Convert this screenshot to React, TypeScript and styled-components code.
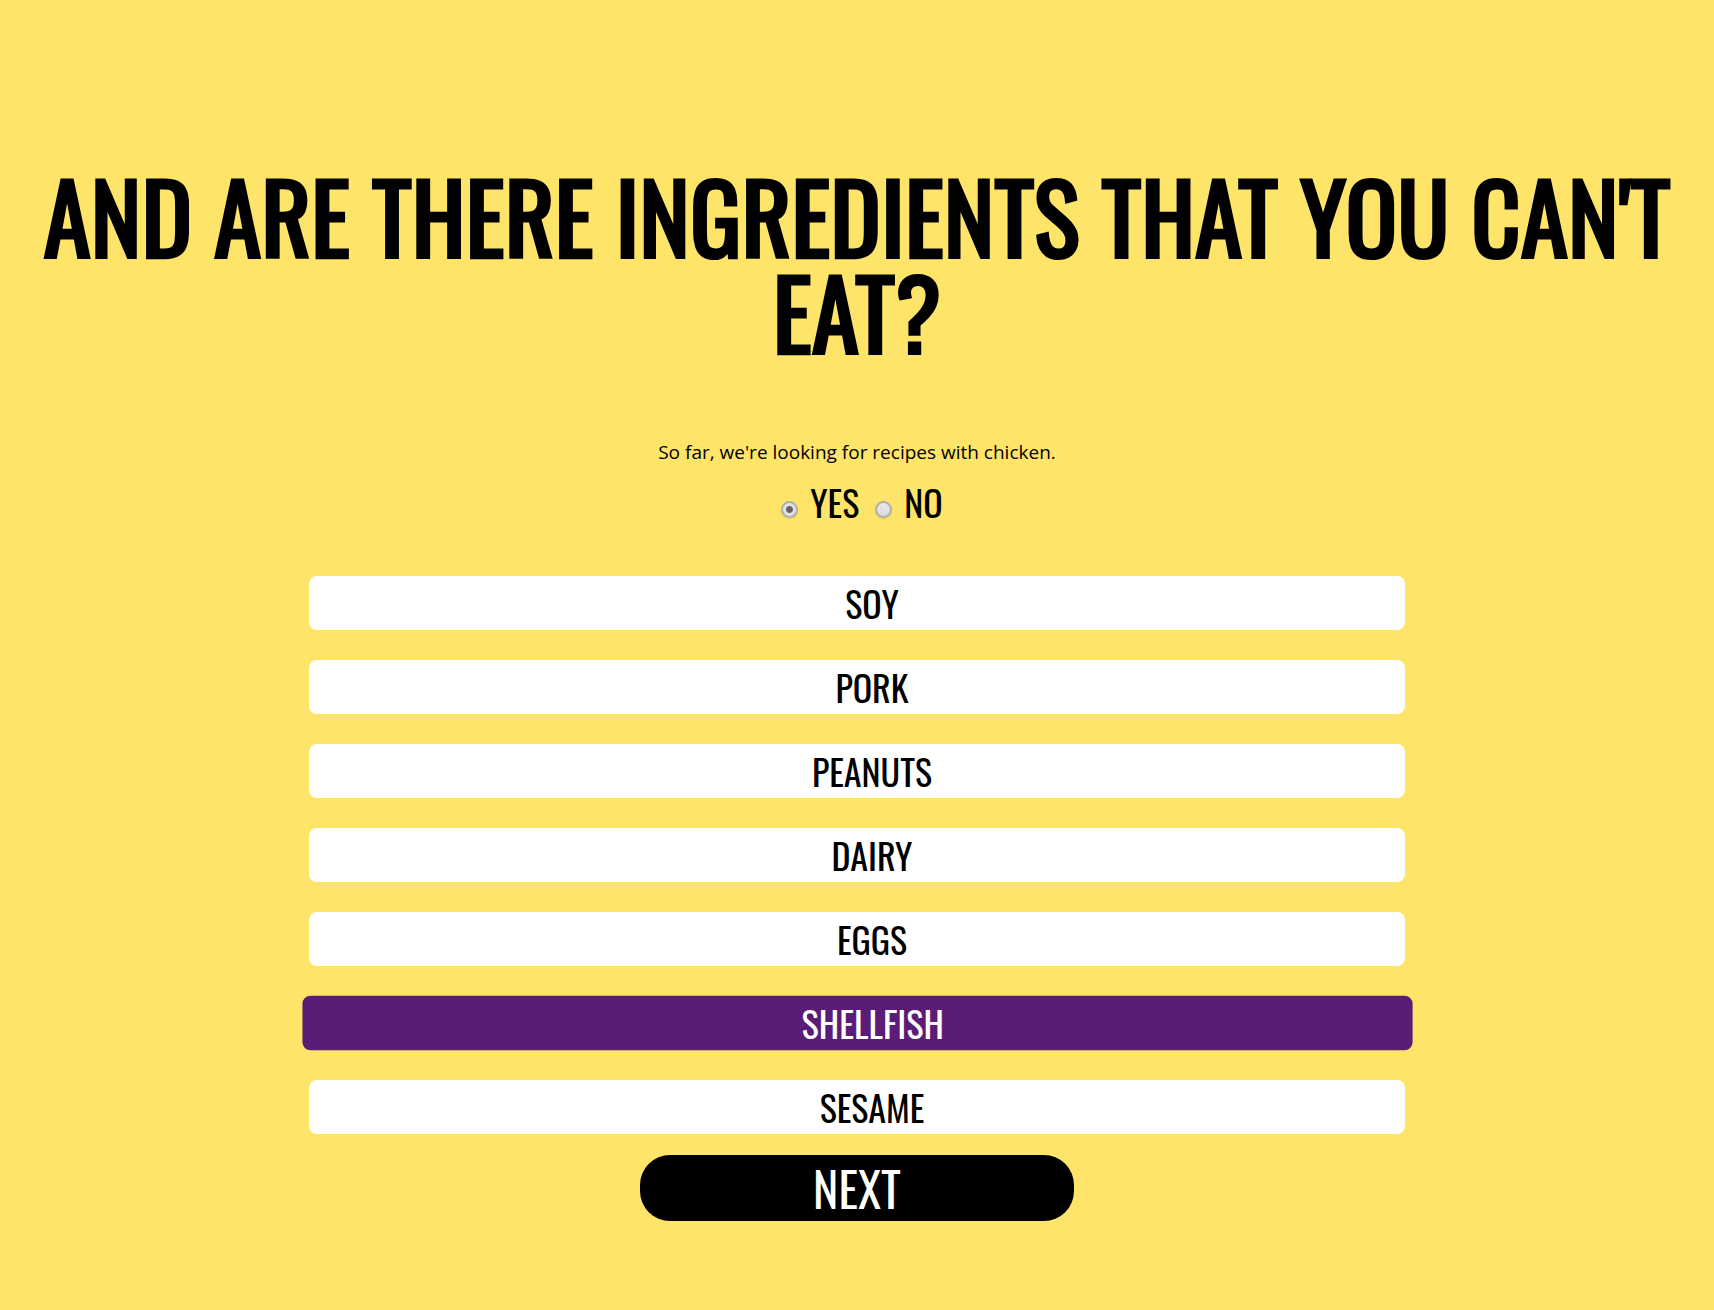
import React, { useState } from "react";
import styled, { createGlobalStyle } from "styled-components";

const display = `Oswald, "Roboto Condensed", "Open Sans Condensed", sans-serif`;

const GlobalStyle = createGlobalStyle`
  *, *::before, *::after { box-sizing: border-box; }
  body {
    margin: 0;
    background: #fee569;
    color: #000;
    font-family: ${display};
  }
`;

const Page = styled.main`
  min-height: 100vh;
  padding: 166px 40px 88px;
  display: flex;
  flex-direction: column;
  align-items: center;
`;

const Title = styled.h1`
  margin: 0;
  font-size: 96px;
  font-weight: 400;
  line-height: 96px;
  text-align: center;
  text-transform: uppercase;
  -webkit-text-stroke: 3px currentColor;
`;

const Summary = styled.p`
  margin: 81px 0 0;
  font-family: "Open Sans", sans-serif;
  font-size: 19px;
  line-height: 26px;
`;

const Choices = styled.fieldset`
  margin: 10px 0 0;
  padding: 0;
  border: 0;
  display: flex;
  gap: 6px;
`;

const Choice = styled.label`
  display: flex;
  align-items: baseline;
  gap: 12px;
  font-size: 36px;
  font-weight: 400;
  line-height: 54px;
  cursor: pointer;
`;

const Radio = styled.input`
  appearance: none;
  margin: 0 0 0 10px;
  width: 17px;
  height: 17px;
  border: 2px solid #b0b0b0;
  border-radius: 50%;
  background: linear-gradient(#e6e6e6, #dcdcdc);
  box-shadow: 0 1px 1px rgba(0, 0, 0, 0.15);

  &:checked {
    background: radial-gradient(circle, #666 3px, #e2e2e2 4px);
  }
`;

const Ingredients = styled.ul`
  list-style: none;
  margin: 47px 0 0;
  padding: 0;
  width: 64vw;
  display: flex;
  flex-direction: column;
  gap: 30px;
`;

const Ingredient = styled.label<{ $selected: boolean }>`
  display: flex;
  align-items: center;
  justify-content: center;
  height: 54px;
  border-radius: 8px;
  background: ${(p) => (p.$selected ? "#5a1c76" : "#fff")};
  color: ${(p) => (p.$selected ? "#fff" : "#000")};
  transform: ${(p) => (p.$selected ? "scale(1.012)" : "none")};
  font-size: 36px;
  font-weight: 400;
  line-height: 54px;
  text-transform: uppercase;
  cursor: pointer;
`;

const HiddenCheck = styled.input`
  appearance: none;
  width: 20px;
  height: 20px;
  margin: 0 10px 0 0;
  opacity: 0;
`;

const NextButton = styled.button`
  margin-top: 21px;
  padding: 0;
  width: 434px;
  height: 66px;
  border: 0;
  border-radius: 30px;
  background: #000;
  color: #fff;
  font-family: inherit;
  font-size: 48px;
  font-weight: 400;
  line-height: 66px;
  text-transform: uppercase;
  cursor: pointer;
`;

const ingredients = ["Soy", "Pork", "Peanuts", "Dairy", "Eggs", "Shellfish", "Sesame"];

export default function App() {
  const [restricted, setRestricted] = useState(true);
  const [selected, setSelected] = useState<string[]>(["Shellfish"]);

  const toggle = (name: string) =>
    setSelected((s) => (s.includes(name) ? s.filter((n) => n !== name) : [...s, name]));

  return (
    <>
      <GlobalStyle />
      <Page>
        <Title>And are there ingredients that you can't eat?</Title>
        <Summary>So far, we're looking for recipes with chicken.</Summary>
        <Choices>
          <Choice htmlFor="yes">
            <Radio id="yes" type="radio" name="restricted" checked={restricted} onChange={() => setRestricted(true)} />
            YES
          </Choice>
          <Choice htmlFor="no">
            <Radio id="no" type="radio" name="restricted" checked={!restricted} onChange={() => setRestricted(false)} />
            NO
          </Choice>
        </Choices>
        <Ingredients>
          {ingredients.map((name) => (
            <li key={name}>
              <Ingredient $selected={selected.includes(name)} htmlFor={name}>
                <HiddenCheck
                  id={name}
                  type="checkbox"
                  checked={selected.includes(name)}
                  onChange={() => toggle(name)}
                />
                {name}
              </Ingredient>
            </li>
          ))}
        </Ingredients>
        <NextButton type="button">Next</NextButton>
      </Page>
    </>
  );
}
